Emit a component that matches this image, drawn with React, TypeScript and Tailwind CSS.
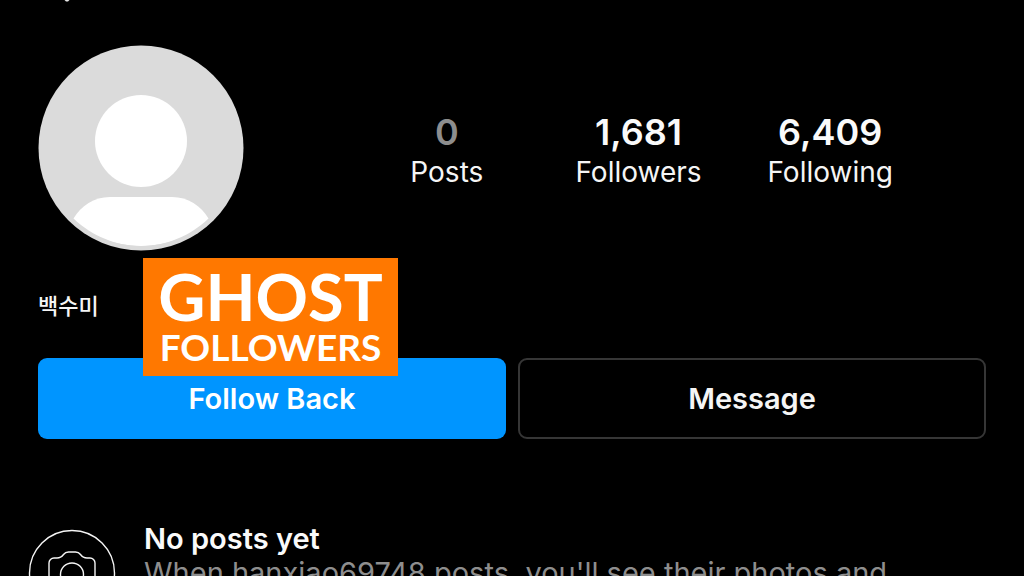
import React from 'react';

interface Stat {
  label: string;
  value: string;
  muted?: boolean;
}

const stats: Stat[] = [
  { label: 'Posts', value: '0', muted: true },
  { label: 'Followers', value: '1,681' },
  { label: 'Following', value: '6,409' },
];

const Avatar: React.FC = () => (
  <svg viewBox="0 0 206 206" className="w-[206px] h-[206px] shrink-0" role="img" aria-label="Profile photo">
    <defs>
      <clipPath id="avatar-body">
        <circle cx="103" cy="98" r="103" />
      </clipPath>
    </defs>
    <circle cx="103" cy="103" r="102.500" fill="#dbdbdb" />
    <circle cx="103" cy="96" r="46" fill="#fff" />
    <path
      d="M35.500 173.500C43 161 56 152 72 152H134C150 152 163 161 170.500 173.500C152 191 128 201 103 201C78 201 54 191 35.500 173.500Z"
      fill="#fff"
      clipPath="url(#avatar-body)"
    />
  </svg>
);

const CameraIcon: React.FC = () => (
  <svg viewBox="0 0 88 88" className="w-[88px] h-[88px] shrink-0" fill="none" stroke="#f5f5f5" strokeWidth="1.4">
    <circle cx="44" cy="44" r="42.500" />
    <path d="M21 34a5 5 0 0 1 5-5h3c3.500 0 5-1.500 6.500-3.500s3-2.500 5-2.500h7c2 0 3.500.5 5 2.500s3 3.500 6.500 3.500h3a5 5 0 0 1 5 5V58a5 5 0 0 1-5 5H26a5 5 0 0 1-5-5Z" />
    <circle cx="44" cy="45.500" r="11.500" />
  </svg>
);

const ProfileStats: React.FC = () => (
  <dl className="grid grid-cols-3 flex-1 pt-2 text-center">
    {stats.map(({ label, value, muted }) => (
      <div key={label} className="flex flex-col-reverse">
        <dt className="text-[28px] leading-10">{label}</dt>
        <dd className={`text-4xl leading-10 font-semibold ${muted ? 'text-[#8e8e8e]' : 'text-[#fafafa]'}`}>{value}</dd>
      </div>
    ))}
  </dl>
);

const App: React.FC = () => {
  return (
    <div className="h-screen overflow-hidden bg-black text-[#f5f5f5] font-['Inter','Noto_Sans_CJK_KR',sans-serif]">
      <header className="h-[45px] pl-16">
        <svg viewBox="0 0 6 2" className="w-[6px] h-[2px]" aria-hidden="true">
          <path d="M0.500 0h5L4 1.500H2Z" fill="#e5e5e5" />
        </svg>
      </header>

      <main>
        <section className="flex items-center pl-[38px] pr-[98px] gap-[107px]">
          <Avatar />
          <ProfileStats />
        </section>

        <section className="relative px-[38px] pt-[39px]">
          <h1 className="text-[22px] leading-8 font-medium">백수미</h1>

          <div className="mt-9 grid grid-cols-2 gap-3">
            <button type="button" className="h-[81px] rounded-[9px] bg-[#0095ff] text-white text-[29px] font-semibold">
              Follow Back
            </button>
            <button type="button" className="h-[81px] rounded-[9px] border-2 border-[#363636] text-[29px] font-semibold">
              Message
            </button>
          </div>

          {/* sticker laid over the name and the follow button */}
          <div className="absolute left-[143px] top-[7px] w-[255px] h-[118px] bg-[#ff7800] text-white text-center font-bold font-['Lato',sans-serif]">
            <p className="mt-[7px] text-[65px] leading-[62px]">GHOST</p>
            <p className="text-[37px] leading-10">FOLLOWERS</p>
          </div>
        </section>

        <section className="flex mt-[90px] pl-7 gap-7">
          <CameraIcon />
          <div className="-mt-[7px]">
            <h2 className="text-[29px] leading-[34px] font-semibold text-[#fafafa]">No posts yet</h2>
            <p className="text-[29px] leading-[34px] text-[#8e8e8e] whitespace-nowrap">
              When hanxiao69748 posts, you'll see their photos and
            </p>
          </div>
        </section>
      </main>
    </div>
  );
};

export default App;
